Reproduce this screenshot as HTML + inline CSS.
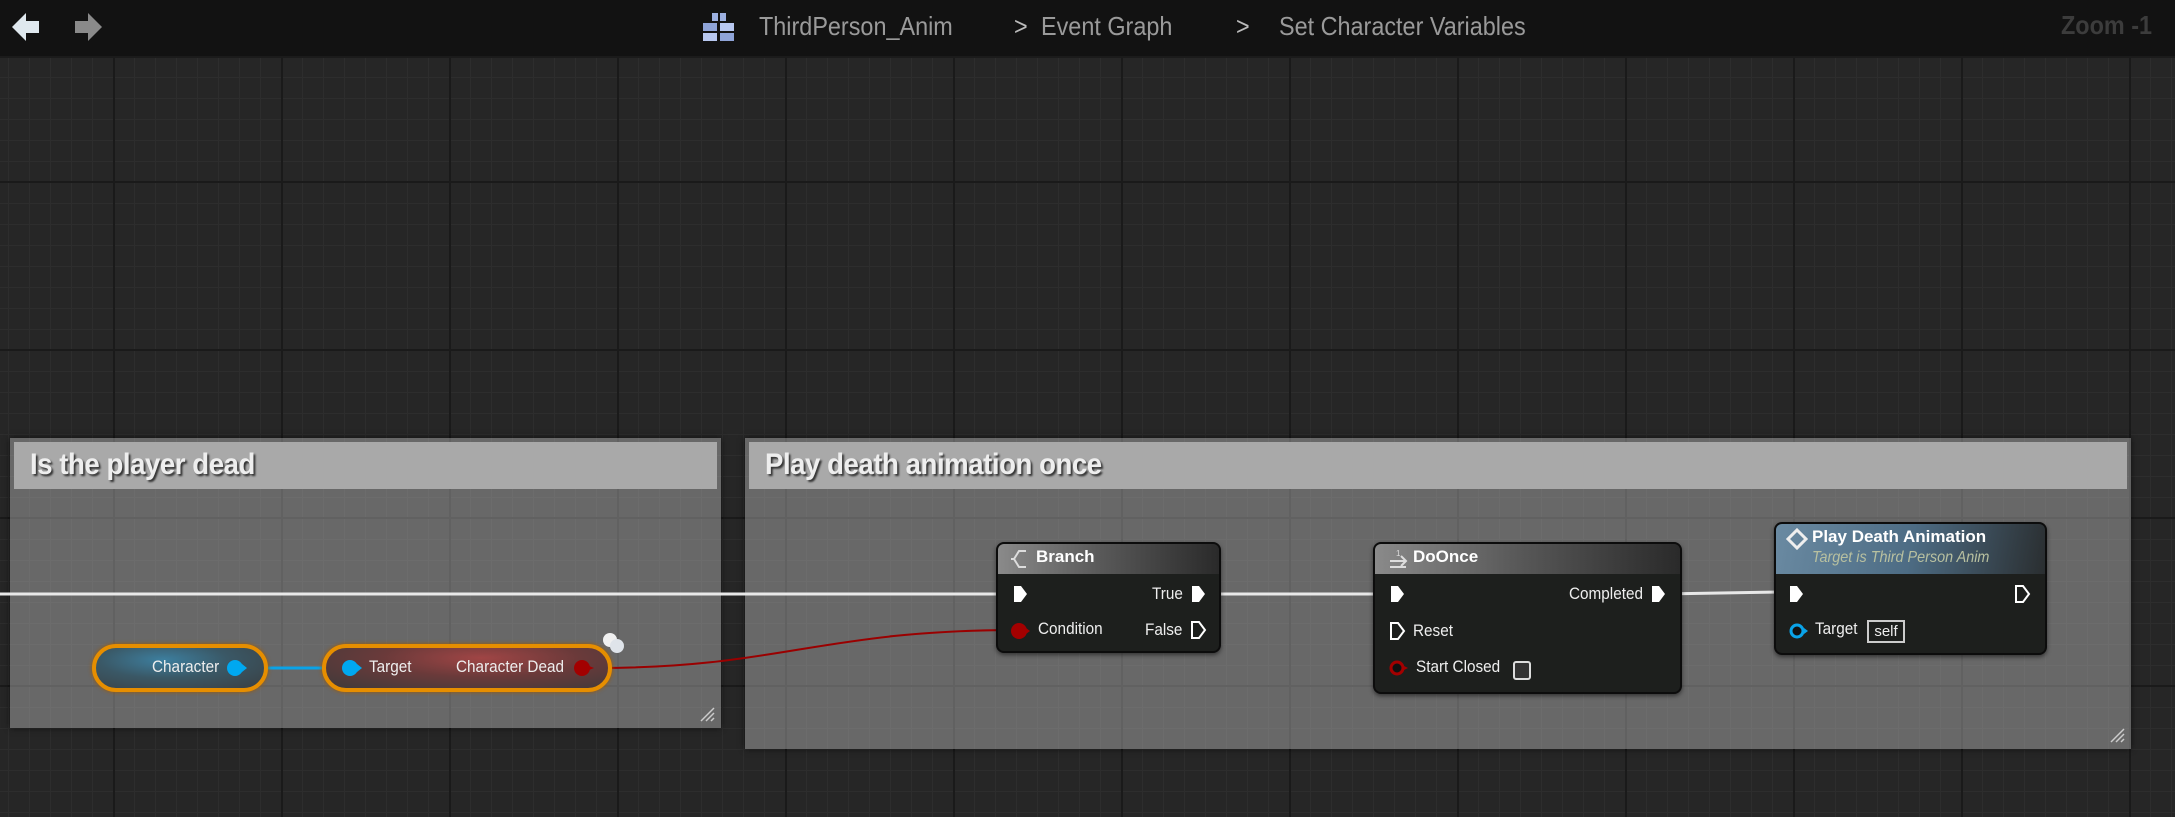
<!DOCTYPE html>
<html><head><meta charset="utf-8"><style>
*{margin:0;padding:0;box-sizing:border-box}
body{width:2175px;height:817px;overflow:hidden;font-family:"Liberation Sans",sans-serif;position:relative;
background-color:#262626;
background-image:
linear-gradient(90deg,#1a1a1a 2px,transparent 2px),
linear-gradient(0deg,#1a1a1a 2px,transparent 2px),
linear-gradient(90deg,#2d2d2d 1px,transparent 1px),
linear-gradient(0deg,#2d2d2d 1px,transparent 1px);
background-size:168px 168px,168px 168px,21px 21px,21px 21px;
background-position:113px 15px,113px 15px,113px 15px,113px 15px;}
.top{position:absolute;left:0;top:0;width:2175px;height:58px;background:#121212;border-bottom:2px solid #1b1b1b}
.t{position:absolute;color:#9a9a9a;font-size:26px;white-space:nowrap;transform:scaleX(.9);transform-origin:left}
.a{position:absolute}
.cm{position:absolute;background:rgba(212,212,212,.38);box-shadow:0 0 6px rgba(0,0,0,.6)}
.cm .h{position:absolute;left:4px;right:4px;top:4px;height:47px;background:#a9a9a9}
.cm .h span{position:absolute;left:16px;top:6px;font-size:30px;font-weight:bold;color:#eee;text-shadow:2px 2px 2px #333;letter-spacing:-0.5px;transform:scaleX(.92);transform-origin:left}
.node{position:absolute;background:#1d1f1d;border-radius:8px;border:2px solid #0c0c0c;box-shadow:0 2px 4px rgba(0,0,0,.5)}
.nh{position:absolute;left:0;right:0;top:0;border-radius:6px 6px 0 0;background:linear-gradient(90deg,#8a8a8a,#5a5a5a 45%,#2a2a2a)}
.lbl{position:absolute;color:#eee;font-size:17px;white-space:nowrap;transform:scaleX(.9);transform-origin:left}
.ttl{position:absolute;color:#fff;font-size:17px;font-weight:bold;white-space:nowrap}
.pill{position:absolute;border:4px solid #e68e00;border-radius:26px;box-shadow:0 0 4px #a05a00}
</style></head><body>
<div class="top"></div>
<svg class="a" style="left:10px;top:10px" width="32" height="34"><path d="M2 17 L16 3 L16 11 L29 11 L29 23 L16 23 L16 31 Z" fill="#dfe8ee"/></svg>
<svg class="a" style="left:72px;top:10px" width="32" height="34"><path d="M30 17 L16 3 L16 11 L3 11 L3 23 L16 23 L16 31 Z" fill="#8a8a8a"/></svg>
<svg class="a" style="left:702px;top:12px" width="34" height="30"><rect x="10" y="1" width="6" height="8" fill="#9cb0e0"/><rect x="18" y="1" width="6" height="8" fill="#9cb0e0"/><rect x="1" y="11" width="14" height="8" fill="#8fa4d8"/><rect x="18" y="11" width="14" height="8" fill="#b8c8f0"/><rect x="1" y="21" width="14" height="8" fill="#b8c8f0"/><rect x="18" y="21" width="14" height="8" fill="#8fa4d8"/></svg>
<div class="t" style="left:759px;top:11px">ThirdPerson_Anim</div>
<div class="t" style="left:1014px;top:11px;color:#bbb">&gt;</div>
<div class="t" style="left:1041px;top:11px">Event Graph</div>
<div class="t" style="left:1236px;top:11px;color:#bbb">&gt;</div>
<div class="t" style="left:1279px;top:11px">Set Character Variables</div>
<div class="t" style="left:2061px;top:10px;color:#3c3c3c;font-weight:bold">Zoom -1</div>

<div class="cm" style="left:10px;top:438px;width:711px;height:290px"><div class="h"><span>Is the player dead</span></div>
<svg class="a" style="right:6px;bottom:6px" width="16" height="16"><path d="M2 15 L15 2 M7 15 L15 7 M12 15 L15 12" stroke="#ccc" stroke-width="1.5"/></svg></div>
<div class="cm" style="left:745px;top:438px;width:1386px;height:311px"><div class="h"><span>Play death animation once</span></div>
<svg class="a" style="right:6px;bottom:6px" width="16" height="16"><path d="M2 15 L15 2 M7 15 L15 7 M12 15 L15 12" stroke="#ccc" stroke-width="1.5"/></svg></div>

<svg class="a" style="left:0;top:0" width="2175" height="817">
<line x1="0" y1="594" x2="1002" y2="594" stroke="#e8e8e8" stroke-width="3"/>
<line x1="1215" y1="594" x2="1378" y2="594" stroke="#e8e8e8" stroke-width="3"/>
<path d="M1662 594 L1780 592" stroke="#e8e8e8" stroke-width="3"/>
<line x1="248" y1="668" x2="345" y2="668" stroke="#0aa3e8" stroke-width="3"/>
<path d="M598 668 C780 668 820 630 1019 630" stroke="#9a0000" stroke-width="2" fill="none"/>
</svg>

<div class="pill" style="left:92px;top:644px;width:176px;height:48px;background:radial-gradient(ellipse at 40% 30%,#3d7f9f 0%,#3a5866 45%,#3a3f42 100%)"></div>
<div class="lbl" style="left:152px;top:657px">Character</div>
<svg class="a" style="left:226px;top:658px" width="22" height="20"><ellipse cx="9" cy="10" rx="8" ry="8" fill="#00a8f0"/><path d="M16 6 L21 10 L16 14Z" fill="#00a8f0"/></svg>
<div class="pill" style="left:322px;top:644px;width:290px;height:48px;background:radial-gradient(ellipse at 55% 25%,#a04545 0%,#6a3a3a 45%,#3e3a3a 100%)"></div>
<svg class="a" style="left:341px;top:658px" width="22" height="20"><ellipse cx="9" cy="10" rx="8" ry="8" fill="#00a8f0"/><path d="M16 6 L21 10 L16 14Z" fill="#00a8f0"/></svg>
<div class="lbl" style="left:369px;top:657px">Target</div>
<div class="lbl" style="left:456px;top:657px">Character Dead</div>
<svg class="a" style="left:573px;top:658px" width="22" height="20"><ellipse cx="9" cy="10" rx="8" ry="8" fill="#a30000"/><path d="M16 8 L21 10 L16 12Z" fill="#a30000"/></svg>
<svg class="a" style="left:600px;top:630px" width="30" height="28"><circle cx="10" cy="10" r="7" fill="#f0f0f0"/><circle cx="17" cy="16" r="7" fill="#dfe4ea"/></svg>

<!-- Branch -->
<div class="node" style="left:996px;top:542px;width:225px;height:111px"><div class="nh" style="height:30px"></div></div>
<svg class="a" style="left:1010px;top:548px" width="22" height="22"><path d="M16 3 L9 3 L4 11 L9 19 L16 19 M4 11 L1 11" stroke="#ddd" stroke-width="2" fill="none"/></svg>
<div class="ttl" style="left:1036px;top:547px">Branch</div>
<svg class="a" style="left:1012px;top:584px" width="18" height="20"><path d="M2 2 H9 L15 10 L9 18 H2Z" fill="#fff"/></svg>
<div class="lbl" style="left:1152px;top:584px">True</div>
<svg class="a" style="left:1190px;top:584px" width="18" height="20"><path d="M2 2 H9 L15 10 L9 18 H2Z" fill="#fff"/></svg>
<svg class="a" style="left:1010px;top:621px" width="22" height="20"><ellipse cx="9" cy="10" rx="8" ry="8" fill="#a30000"/><path d="M16 7 L20 10 L16 13Z" fill="#a30000"/></svg>
<div class="lbl" style="left:1038px;top:619px">Condition</div>
<div class="lbl" style="left:1145px;top:620px">False</div>
<svg class="a" style="left:1190px;top:620px" width="18" height="20"><path d="M2 2 H9 L15 10 L9 18 H2Z" fill="none" stroke="#fff" stroke-width="2"/></svg>

<!-- DoOnce -->
<div class="node" style="left:1373px;top:542px;width:309px;height:152px"><div class="nh" style="height:30px"></div></div>
<svg class="a" style="left:1388px;top:548px" width="22" height="22"><path d="M2 13 H18 M13 8 L18 13 L13 18 M2 19 H18" stroke="#ddd" stroke-width="2" fill="none"/><text x="8" y="8" font-size="8" fill="#ddd" font-family="Liberation Sans">1</text></svg>
<div class="ttl" style="left:1413px;top:547px">DoOnce</div>
<svg class="a" style="left:1389px;top:584px" width="18" height="20"><path d="M2 2 H9 L15 10 L9 18 H2Z" fill="#fff"/></svg>
<div class="lbl" style="left:1569px;top:584px">Completed</div>
<svg class="a" style="left:1650px;top:584px" width="18" height="20"><path d="M2 2 H9 L15 10 L9 18 H2Z" fill="#fff"/></svg>
<svg class="a" style="left:1389px;top:621px" width="18" height="20"><path d="M2 2 H9 L15 10 L9 18 H2Z" fill="none" stroke="#fff" stroke-width="2"/></svg>
<div class="lbl" style="left:1413px;top:621px">Reset</div>
<svg class="a" style="left:1388px;top:658px" width="22" height="20"><circle cx="9" cy="10" r="6" fill="#111" stroke="#a30000" stroke-width="3"/><path d="M16 8 L20 10 L16 12Z" fill="#a30000"/></svg>
<div class="lbl" style="left:1416px;top:657px">Start Closed</div>
<div class="a" style="left:1513px;top:661px;width:18px;height:19px;border:2px solid #ddd;border-radius:3px;background:#333"></div>

<!-- Play Death Animation -->
<div class="node" style="left:1774px;top:522px;width:273px;height:133px"><div class="nh" style="height:50px;background:linear-gradient(100deg,#6a8aa2,#4d6c84 50%,#2a2e30 100%)"></div></div>
<svg class="a" style="left:1786px;top:528px" width="22" height="22"><path d="M11 2 L20 11 L11 20 L2 11Z" fill="none" stroke="#eee" stroke-width="3"/></svg>
<div class="ttl" style="left:1812px;top:527px">Play Death Animation</div>
<div class="lbl" style="left:1812px;top:549px;font-style:italic;color:#b8c0a0;font-size:16px">Target is Third Person Anim</div>
<svg class="a" style="left:1788px;top:584px" width="18" height="20"><path d="M2 2 H9 L15 10 L9 18 H2Z" fill="#fff"/></svg>
<svg class="a" style="left:2014px;top:584px" width="18" height="20"><path d="M2 2 H9 L15 10 L9 18 H2Z" fill="none" stroke="#fff" stroke-width="2"/></svg>
<svg class="a" style="left:1788px;top:621px" width="22" height="20"><circle cx="9" cy="10" r="6" fill="#111" stroke="#0aa3e8" stroke-width="3"/><path d="M16 7 L20 10 L16 13Z" fill="#0aa3e8"/></svg>
<div class="lbl" style="left:1815px;top:619px">Target</div>
<div class="a" style="left:1867px;top:620px;width:38px;height:23px;border:2px solid #ccc;color:#eee;font-size:15px;text-align:center;line-height:19px">self</div>
</body></html>
